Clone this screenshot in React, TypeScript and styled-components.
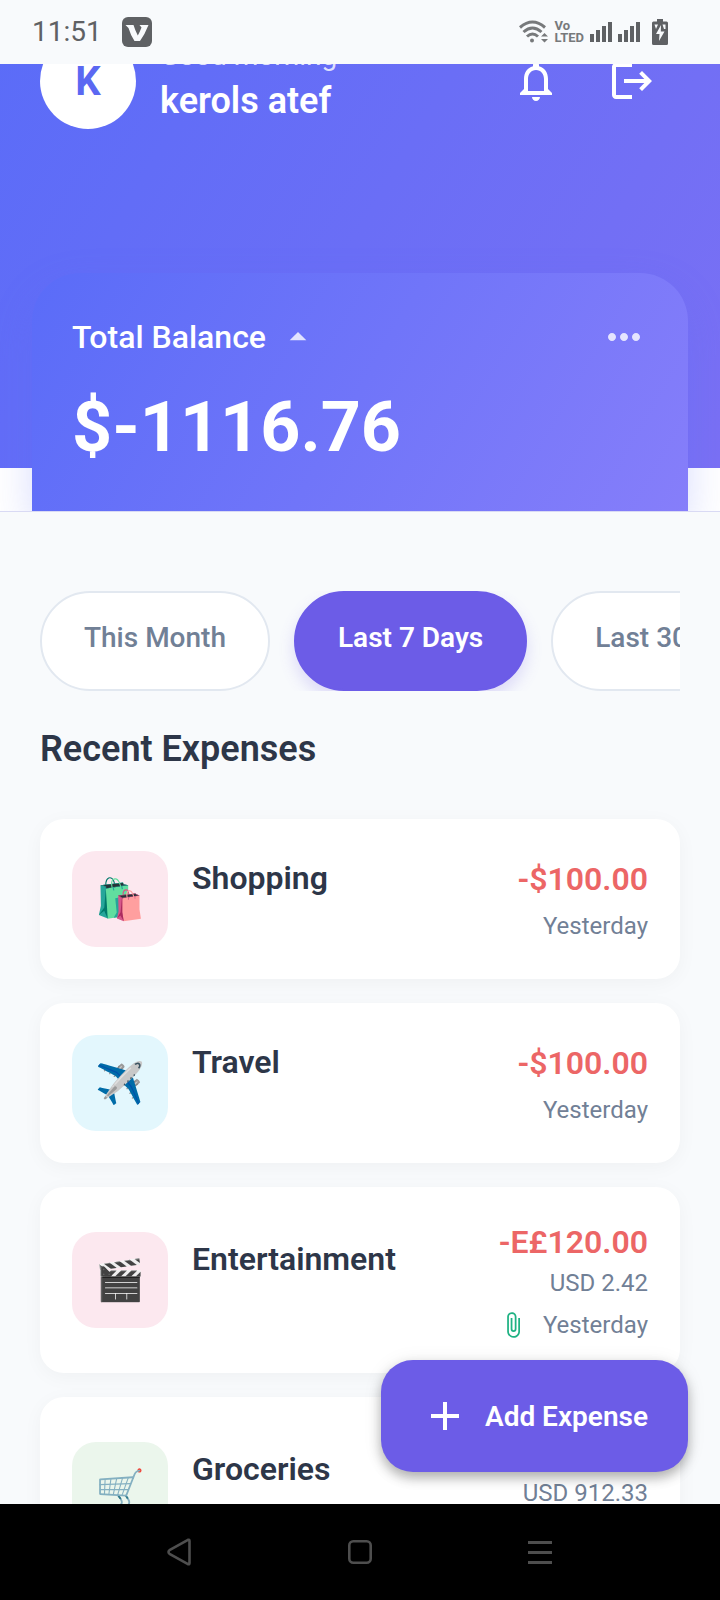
import React from "react";
import styled, { createGlobalStyle } from "styled-components";
import {
  MdAdd,
  MdArrowDropUp,
  MdAttachFile,
  MdLogout,
  MdMoreHoriz,
  MdNotificationsNone,
} from "react-icons/md";

const GlobalStyle = createGlobalStyle`
  *, *::before, *::after { box-sizing: border-box; }
  body {
    margin: 0;
    background: #f8fafc;
    font-family: Roboto, "Noto Sans", sans-serif;
    color: #2d3648;
  }
  button {
    font: inherit;
    border: 0;
    padding: 0;
    background: none;
    cursor: pointer;
  }
  h1, h2, h3, p, ul { margin: 0; padding: 0; font-weight: 400; }
  ul { list-style: none; }
  svg { display: block; flex: none; }
`;

const Screen = styled.div`
  display: flex;
  flex-direction: column;
  height: 100vh;
  overflow: hidden;
`;

const StatusBar = styled.div`
  display: flex;
  flex: none;
  align-items: center;
  justify-content: space-between;
  height: 64px;
  padding: 0 52px 0 32px;
  color: #5f6164;
`;

const StatusGroup = styled.div<{ $gap: number }>`
  display: flex;
  align-items: center;
  gap: ${(p) => p.$gap}px;
`;

const Clock = styled.span`
  font-size: 28px;
  line-height: 36px;
`;

const VolteBadge = styled.span`
  display: flex;
  flex-direction: column;
  font-size: 13px;
  font-weight: 700;
  line-height: 12px;
  color: #77797b;
`;

const Main = styled.main`
  position: relative;
  flex: 1;
  min-height: 0;
  overflow: hidden;
`;

const Hero = styled.section`
  display: flex;
  flex-direction: column;
  overflow: hidden;
  background: #ffffff;
  border-bottom: 1px solid #d9daf4;
`;

const HeroHeader = styled.header`
  display: flex;
  align-items: flex-start;
  gap: 24px;
  height: 468px;
  margin-top: -64px;
  padding: 33px 40px 0;
  background: linear-gradient(120deg, #5a6cf8 0%, #7a70f4 100%);
  color: #ffffff;
`;

const Avatar = styled.div`
  display: flex;
  flex: none;
  align-items: center;
  justify-content: center;
  width: 96px;
  height: 96px;
  border-radius: 50%;
  background: #ffffff;
  color: #5b68f2;
  font-size: 40px;
  font-weight: 700;
`;

const Identity = styled.div`
  display: flex;
  flex: 1;
  flex-direction: column;
  justify-content: center;
  gap: 8px;
  height: 96px;
`;

const Greeting = styled.p`
  font-size: 28px;
  line-height: 32px;
  color: rgba(255, 255, 255, 0.8);
`;

const UserName = styled.h1`
  font-size: 36px;
  font-weight: 600;
  line-height: 42px;
`;

const HeaderActions = styled.div`
  display: flex;
`;

const IconButton = styled.button`
  display: flex;
  align-items: center;
  justify-content: center;
  width: 96px;
  height: 96px;
  color: #ffffff;
`;

const BalanceCard = styled.div`
  position: relative;
  display: flex;
  flex-direction: column;
  gap: 24px;
  margin: -195px 32px 0;
  padding: 40px 40px 42px;
  border-radius: 48px 48px 0 0;
  background: linear-gradient(120deg, #5a6cf8 0%, #867efa 100%);
  box-shadow: 0 16px 40px rgba(91, 108, 248, 0.24);
  color: #ffffff;
`;

const BalanceTop = styled.div`
  display: flex;
  align-items: center;
  justify-content: space-between;
  height: 48px;
`;

const BalanceToggle = styled.button`
  display: flex;
  align-items: center;
  gap: 12px;
  color: #ffffff;
  font-size: 32px;
  font-weight: 500;
  line-height: 48px;

  svg { color: rgba(255, 255, 255, 0.8); }
`;

const MoreButton = styled.button`
  color: rgba(255, 255, 255, 0.8);
`;

const BalanceAmount = styled.p`
  font-size: 70px;
  font-weight: 700;
  line-height: 84px;
`;

const Content = styled.section`
  padding: 79px 40px 0;
`;

const Periods = styled.div`
  display: flex;
  gap: 24px;
  overflow: hidden;
`;

const Period = styled.button<{ $active?: boolean }>`
  flex: none;
  height: 100px;
  padding: 0 42px 8px;
  border-radius: 50px;
  border: 2px solid ${(p) => (p.$active ? "#6c5ce7" : "#e2e8f0")};
  background: ${(p) => (p.$active ? "#6c5ce7" : "#ffffff")};
  box-shadow: ${(p) => (p.$active ? "0 8px 16px rgba(108, 92, 231, 0.2)" : "none")};
  color: ${(p) => (p.$active ? "#ffffff" : "#718096")};
  font-size: 28px;
  font-weight: ${(p) => (p.$active ? 600 : 500)};
  white-space: nowrap;
`;

const SectionTitle = styled.h2`
  margin: 36px 0 48px;
  font-size: 36px;
  font-weight: 600;
  line-height: 44px;
`;

const ExpenseList = styled.ul`
  display: flex;
  flex-direction: column;
  gap: 24px;
`;

const ExpenseCard = styled.li`
  display: flex;
  align-items: center;
  gap: 24px;
  padding: 32px;
  border-radius: 24px;
  background: #ffffff;
  box-shadow: 0 4px 20px rgba(0, 0, 0, 0.04);
`;

const CategoryTile = styled.div<{ $tint: string }>`
  display: flex;
  flex: none;
  align-items: center;
  justify-content: center;
  width: 96px;
  height: 96px;
  border-radius: 24px;
  background: ${(p) => p.$tint};
  font-size: 40px;
`;

const CategoryName = styled.h3`
  flex: 1;
  padding-bottom: 42px;
  font-size: 32px;
  font-weight: 600;
  line-height: 36px;
`;

const Figures = styled.div`
  display: flex;
  flex-direction: column;
  align-items: flex-end;
  padding-top: 2px;
`;

const Amount = styled.p`
  min-height: 42px;
  color: #ec6666;
  font-size: 32px;
  font-weight: 600;
  line-height: 42px;
`;

const Converted = styled.p`
  margin-top: 4px;
  color: #718096;
  font-size: 24px;
  line-height: 32px;
`;

const DateLine = styled.div`
  display: flex;
  align-items: center;
  gap: 16px;
  min-height: 32px;
  margin-top: 10px;
  color: #718096;
  font-size: 24px;
  line-height: 32px;

  svg { color: #1fb283; }
`;

const AddButton = styled.button`
  position: absolute;
  right: 32px;
  bottom: 32px;
  display: flex;
  align-items: center;
  gap: 16px;
  height: 112px;
  padding: 0 40px;
  border-radius: 32px;
  background: #6c5ce7;
  box-shadow: 0 6px 12px rgba(0, 0, 0, 0.28), 0 2px 20px rgba(0, 0, 0, 0.08);
  color: #ffffff;
  font-size: 28px;
  font-weight: 600;
`;

const NavBar = styled.nav`
  display: flex;
  flex: none;
  align-items: center;
  justify-content: center;
  gap: 152px;
  height: 96px;
  background: #000000;
  color: #4e4e4e;
`;

const NavButton = styled.button`
  color: inherit;
`;

type Expense = {
  category: string;
  emoji: string;
  tint: string;
  amount?: string;
  converted?: string;
  date?: string;
  attachment?: boolean;
};

const expenses: Expense[] = [
  { category: "Shopping", emoji: "🛍️", tint: "#fce8ef", amount: "-$100.00", date: "Yesterday" },
  { category: "Travel", emoji: "✈️", tint: "#e3f7fd", amount: "-$100.00", date: "Yesterday" },
  {
    category: "Entertainment",
    emoji: "🎬",
    tint: "#fce8ef",
    amount: "-E£120.00",
    converted: "USD 2.42",
    date: "Yesterday",
    attachment: true,
  },
  { category: "Groceries", emoji: "🛒", tint: "#ebf6ec", converted: "USD 912.33" },
];

const AppBadge = () => (
  <svg width="30" height="30" viewBox="0 0 30 30">
    <rect width="30" height="30" rx="6" fill="currentColor" />
    <path d="M3.500 8H11.500Q13 13 15.800 18.500Q18 14.500 19.500 10.500L17.500 8H26.500Q23 17 18 24H12.500Q8.500 18 6.500 11Z" fill="#f8fafc" />
  </svg>
);

const WifiIcon = () => (
  <svg width="30" height="24" viewBox="0 0 30 24" fill="none" stroke="#77797b" strokeWidth="3">
    <path d="M1 7.500Q13.500 -3.500 26 7.500" />
    <path d="M4.500 12Q13.500 4 22.500 12" />
    <path d="M8 16.500Q13.500 11.500 19 16.500" />
    <circle cx="13" cy="20.500" r="2" fill="#77797b" stroke="none" />
    <path d="M22 16.500L25.500 13L29 16.500ZM22 19L25.500 22.500L29 19Z" fill="#77797b" stroke="none" />
  </svg>
);

const SignalIcon = () => (
  <svg width="22" height="20" viewBox="0 0 22 20" fill="currentColor">
    <rect x="0" y="12" width="4" height="8" />
    <rect x="6" y="8" width="4" height="12" />
    <rect x="12" y="4" width="4" height="16" />
    <rect x="18" y="0" width="4" height="20" />
  </svg>
);

const BatteryIcon = () => (
  <svg width="16" height="26" viewBox="0 0 16 26">
    <path d="M5 0H11V2.500H14.500Q16 2.500 16 4V24.500Q16 26 14.500 26H1.500Q0 26 0 24.500V4Q0 2.500 1.500 2.500H5Z" fill="currentColor" />
    <path d="M2.500 5.500H6L4 10ZM10.500 5.500H13.500V10H12Z" fill="#f8fafc" />
    <path d="M9 6L4 15H7.500L7 22L12.500 12.500H8.800Z" fill="#f8fafc" />
  </svg>
);

const BackIcon = () => (
  <svg width="28" height="28" viewBox="0 0 28 28" fill="none" stroke="currentColor" strokeWidth="2.600" strokeLinejoin="round">
    <path d="M2.500 14Q2.500 13 3.500 12.200L22 1.800Q23.500 1.300 23.500 3V25Q23.500 26.700 22 26.200L3.500 15.800Q2.500 15 2.500 14Z" />
  </svg>
);

const HomeIcon = () => (
  <svg width="28" height="28" viewBox="0 0 28 28" fill="none" stroke="currentColor" strokeWidth="2.600">
    <rect x="3.300" y="3.300" width="21.400" height="21.400" rx="4" />
  </svg>
);

const RecentsIcon = () => (
  <svg width="28" height="28" viewBox="0 0 28 28" fill="currentColor">
    <rect x="2" y="3" width="24" height="3" />
    <rect x="2" y="13" width="24" height="3" />
    <rect x="2" y="23" width="24" height="3" />
  </svg>
);

const ExpenseRow = ({ expense }: { expense: Expense }) => (
  <ExpenseCard>
    <CategoryTile $tint={expense.tint}>{expense.emoji}</CategoryTile>
    <CategoryName>{expense.category}</CategoryName>
    <Figures>
      <Amount>{expense.amount}</Amount>
      {expense.converted && <Converted>{expense.converted}</Converted>}
      <DateLine>
        {expense.attachment && <MdAttachFile size={28} />}
        {expense.date}
      </DateLine>
    </Figures>
  </ExpenseCard>
);

export default function App() {
  return (
    <>
      <GlobalStyle />
      <Screen>
        <StatusBar>
          <StatusGroup $gap={20}>
            <Clock>11:51</Clock>
            <AppBadge />
          </StatusGroup>
          <StatusGroup $gap={12}>
            <StatusGroup $gap={6}>
              <WifiIcon />
              <VolteBadge>
                <span>Vo</span>
                <span>LTED</span>
              </VolteBadge>
              <SignalIcon />
              <SignalIcon />
            </StatusGroup>
            <BatteryIcon />
          </StatusGroup>
        </StatusBar>

        <Main>
          <Hero>
            <HeroHeader>
              <Avatar>K</Avatar>
              <Identity>
                <Greeting>Good morning</Greeting>
                <UserName>kerols atef</UserName>
              </Identity>
              <HeaderActions>
                <IconButton aria-label="Notifications">
                  <MdNotificationsNone size={48} />
                </IconButton>
                <IconButton aria-label="Log out">
                  <MdLogout size={48} />
                </IconButton>
              </HeaderActions>
            </HeroHeader>
            <BalanceCard>
              <BalanceTop>
                <BalanceToggle>
                  Total Balance
                  <MdArrowDropUp size={40} />
                </BalanceToggle>
                <MoreButton aria-label="More options">
                  <MdMoreHoriz size={48} />
                </MoreButton>
              </BalanceTop>
              <BalanceAmount>$-1116.76</BalanceAmount>
            </BalanceCard>
          </Hero>

          <Content>
            <Periods>
              <Period>This Month</Period>
              <Period $active>Last 7 Days</Period>
              <Period>Last 30 Days</Period>
            </Periods>
            <SectionTitle>Recent Expenses</SectionTitle>
            <ExpenseList>
              {expenses.map((expense) => (
                <ExpenseRow key={expense.category} expense={expense} />
              ))}
            </ExpenseList>
          </Content>

          <AddButton>
            <MdAdd size={48} />
            Add Expense
          </AddButton>
        </Main>

        <NavBar>
          <NavButton aria-label="Back">
            <BackIcon />
          </NavButton>
          <NavButton aria-label="Home">
            <HomeIcon />
          </NavButton>
          <NavButton aria-label="Recent apps">
            <RecentsIcon />
          </NavButton>
        </NavBar>
      </Screen>
    </>
  );
}
